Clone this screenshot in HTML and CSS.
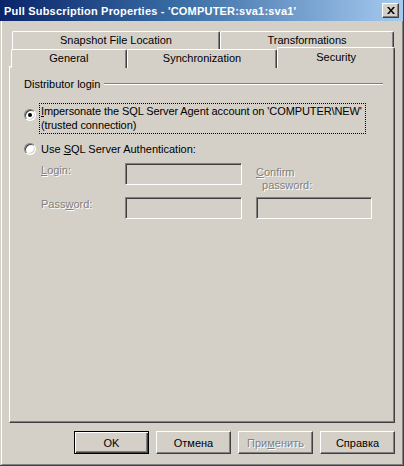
FILE: index.html
```html
<!DOCTYPE html>
<html>
<head>
<meta charset="utf-8">
<link rel="stylesheet" href="styles.css">
</head>
<body>
<div class="window">
  <div class="titlebar">
    <span class="title">Pull Subscription Properties - 'COMPUTER:sva1:sva1'</span>
    <span class="close"><svg width="8" height="7" viewBox="0 0 8 7"><path d="M0 0h2l2 2.5L6 0h2L5 3.5 8 7H6L4 4.5 2 7H0l3-3.5z" fill="#000"/></svg></span>
  </div>
  <div class="client">
    <div class="tabs">
      <div class="tabrow back">
        <div class="tab t-snap">Snapshot File Location</div>
        <div class="tab t-trans">Transformations</div>
      </div>
      <div class="tabrow front">
        <div class="tab t-gen">General</div>
        <div class="tab t-sync">Synchronization</div>
        <div class="tab t-sec sel">Security</div>
      </div>
    </div>
    <div class="panel">
      <div class="group">
        <span class="gtitle">Distributor login</span>
        <span class="gline"></span>
      </div>
      <div class="opt opt1">
        <span class="radio checked"></span>
        <span class="focus"><u>I</u>mpersonate the SQL Server Agent account on 'COMPUTER\NEW'<br>(trusted connection)</span>
      </div>
      <div class="opt opt2">
        <span class="radio"></span>
        <span class="lbl">Use <u>S</u>QL Server Authentication:</span>
      </div>
      <div class="fields">
        <span class="dis f-login"><u>L</u>ogin:</span>
        <span class="edit e-login"></span>
        <span class="dis f-confirm"><u>C</u>onfirm<br>&nbsp;&nbsp;password:</span>
        <span class="dis f-pass">Pass<u>w</u>ord:</span>
        <span class="edit e-pass"></span>
        <span class="edit e-conf"></span>
      </div>
    </div>
    <div class="buttons">
      <div class="btn default"><span>OK</span></div>
      <div class="btn"><span>Отмена</span></div>
      <div class="btn disabled"><span>При<u>м</u>енить</span></div>
      <div class="btn"><span>Справка</span></div>
    </div>
  </div>
</div>
</body>
</html>
```
FILE: styles.css
```css
html, body {
  margin: 0;
  padding: 0;
  background: #d4d0c8;
}
body {
  width: 404px;
  height: 466px;
  overflow: hidden;
  font-family: "Liberation Sans", Arial, sans-serif;
  font-size: 11px;
  color: #000;
}
.window {
  width: 404px;
  height: 466px;
  box-sizing: border-box;
  background: #d4d0c8;
  border-right: 1px solid #404040;
  border-bottom: 1px solid #404040;
  display: flex;
  flex-direction: column;
}
.titlebar {
  height: 21px;
  flex: none;
  background: linear-gradient(to right, #0a246a 0%, #3a6ea5 45%, #a6caf0 100%);
  display: flex;
  align-items: center;
  padding-left: 4px;
  padding-right: 4px;
  box-sizing: border-box;
}
.title {
  color: #fff;
  font-weight: bold;
  font-size: 11px;
  letter-spacing: 0.2px;
  flex: 1;
  padding-top: 1px;
}
.close {
  width: 17px;
  height: 15px;
  box-sizing: border-box;
  background: #d4d0c8;
  border-top: 1px solid #fff;
  border-left: 1px solid #fff;
  border-right: 1px solid #404040;
  border-bottom: 1px solid #404040;
  box-shadow: inset -1px -1px 0 #808080;
  display: flex;
  align-items: center;
  justify-content: center;
}
.client {
  flex: 1;
  border-left: 1px solid #fff;
  border-right: 1px solid #808080;
  border-bottom: 1px solid #808080;
  margin-left: 1px;
  padding: 10px 7px 0 7px;
  display: flex;
  flex-direction: column;
}
.tabs {
  height: 36px;
  position: relative;
  z-index: 2;
  margin-bottom: -1px;
}
.tabrow {
  display: flex;
}
.back {
  margin-left: 3px;
}
.front {
  margin-left: 2px;
  height: 18px;
}
.tab {
  box-sizing: border-box;
  height: 18px;
  border-top: 1px solid #fff;
  border-left: 1px solid #fff;
  border-right: 1px solid #404040;
  box-shadow: inset -1px 0 0 #808080;
  border-top-left-radius: 2px;
  border-top-right-radius: 2px;
  text-align: center;
  line-height: 17px;
  background: #d4d0c8;
}
.t-snap { width: 208px; }
.t-trans { width: 174px; }
.t-gen { width: 116px; height: 19px; }
.t-sync { width: 151px; height: 19px; }
.t-sec {
  width: 118px;
  height: 21px;
  margin-top: -2px;
  position: relative;
  z-index: 3;
  line-height: 18px;
}
.panel {
  height: 357px;
  width: 386px;
  box-sizing: border-box;
  border-top: 1px solid #fff;
  border-left: 1px solid #fff;
  border-right: 1px solid #404040;
  border-bottom: 1px solid #404040;
  box-shadow: inset -1px -1px 0 #808080;
  padding: 10px 12px 0 14px;
}
.group {
  display: flex;
  align-items: center;
  height: 14px;
}
.gtitle {
  margin-right: 4px;
  white-space: nowrap;
}
.gline {
  flex: none;
  width: 279px;
  height: 0;
  border-top: 1px solid #808080;
  border-bottom: 1px solid #fff;
}
.opt {
  display: flex;
  align-items: flex-start;
}
.opt1 {
  margin-top: 13px;
}
.opt2 {
  margin-top: 9px;
}
.radio {
  flex: none;
  width: 12px;
  height: 12px;
  box-sizing: border-box;
  border-radius: 50%;
  background: #fff;
  border: 1px solid;
  border-color: #808080 #fff #fff #808080;
  box-shadow: inset 1px 1px 0 #404040, inset -1px -1px 0 #d4d0c8;
  margin-right: 5px;
  position: relative;
}
.opt1 .radio {
  margin-top: 5px;
}
.opt2 .radio {
  margin-top: 1px;
}
.radio.checked::after {
  content: "";
  position: absolute;
  left: 3px;
  top: 3px;
  width: 4px;
  height: 4px;
  border-radius: 50%;
  background: #000;
}
.focus {
  outline: 1px dotted #000;
  outline-offset: 0;
  padding: 0 2px 1px 1px;
  width: 325px;
  box-sizing: border-box;
  white-space: nowrap;
  letter-spacing: -0.1px;
  line-height: 14px;
  margin-left: -1px;
}
.lbl {
  line-height: 14px;
}
.fields {
  display: grid;
  grid-template-columns: 84px 117px 14px 116px;
  grid-template-rows: 34px 22px;
  margin-top: 7px;
  margin-left: 17px;
}
.dis {
  color: #808080;
  text-shadow: 1px 1px 0 #fff;
  line-height: 14px;
}
.f-login { grid-column: 1; grid-row: 1; }
.e-login { grid-column: 2; grid-row: 1; }
.f-confirm { grid-column: 4; grid-row: 1; margin-top: 3px; line-height: 13px; }
.f-pass { grid-column: 1; grid-row: 2; }
.e-pass { grid-column: 2; grid-row: 2; }
.e-conf { grid-column: 4; grid-row: 2; }
.edit {
  box-sizing: border-box;
  height: 22px;
  background: #d4d0c8;
  border: 1px solid;
  border-color: #808080 #fff #fff #808080;
  box-shadow: inset 1px 1px 0 #404040, inset -1px -1px 0 #d4d0c8;
}
.buttons {
  display: flex;
  justify-content: flex-end;
  gap: 7px;
  margin-top: 8px;
  width: 386px;
}
.btn {
  box-sizing: border-box;
  width: 75px;
  height: 23px;
  border: 1px solid;
  border-color: #fff #404040 #404040 #fff;
  box-shadow: inset -1px -1px 0 #808080;
  display: flex;
  align-items: center;
  justify-content: center;
}
.btn.default {
  border: 1px solid #000;
  box-shadow: inset 1px 1px 0 #fff, inset -1px -1px 0 #404040, inset -2px -2px 0 #808080;
}
.btn.disabled {
  color: #808080;
  text-shadow: 1px 1px 0 #fff;
}
u {
  text-decoration: underline;
  text-underline-offset: 1px;
}
```
